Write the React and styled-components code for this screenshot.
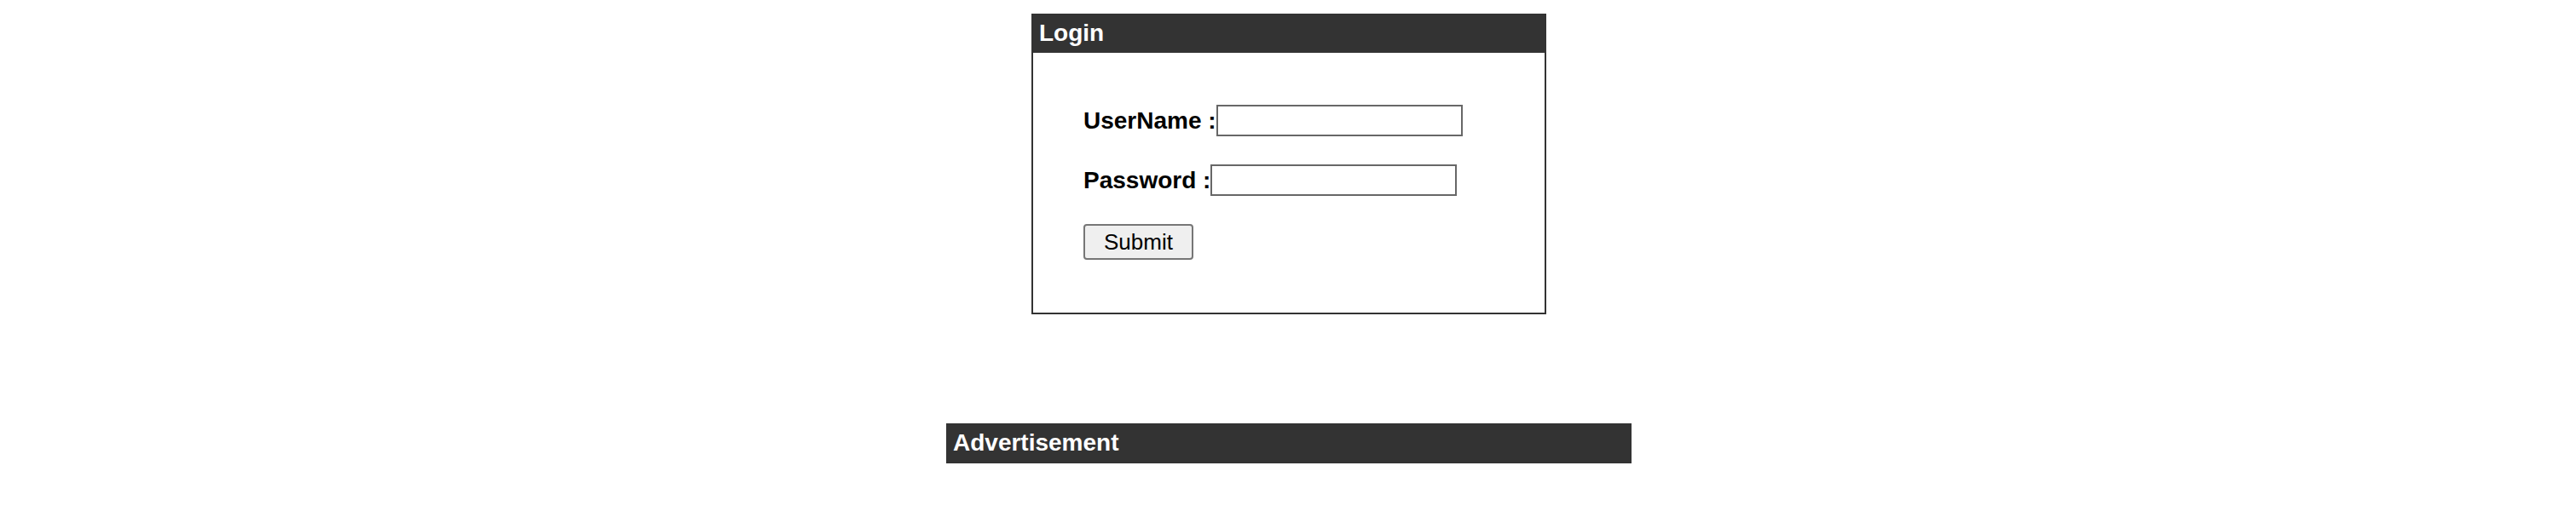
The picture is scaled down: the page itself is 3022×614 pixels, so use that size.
import React from "react";
import styled, { createGlobalStyle } from "styled-components";

const GlobalStyle = createGlobalStyle`
  body {
    margin: 0;
    background: #ffffff;
    font-family: "Liberation Sans", Arial, sans-serif;
    color: #000000;
  }
`;

const Page = styled.div`
  display: flex;
  flex-direction: column;
  align-items: center;
  padding: 16px 0 0 2px;
  gap: 128px;
`;

const Panel = styled.section`
  width: ${(p) => p.width}px;
  box-sizing: border-box;
  border: ${(p) => (p.bordered ? "2px solid #333333" : "none")};
`;

const PanelTitle = styled.h3`
  margin: 0;
  padding: ${(p) => (p.bordered ? "5px 7px 7px" : "7px 8px 8px")};
  background: #333333;
  color: #ffffff;
  font-size: 28px;
  line-height: 32px;
  font-weight: bold;
`;

const Form = styled.form`
  display: flex;
  flex-direction: column;
  align-items: flex-start;
  gap: 33px;
  padding: 61px 0 62px 59px;
`;

const Row = styled.div`
  display: flex;
  align-items: center;
`;

const Label = styled.label`
  font-size: 28px;
  font-weight: bold;
  line-height: 32px;
`;

const Input = styled.input`
  box-sizing: border-box;
  width: 289px;
  height: 37px;
  margin: 0;
  border: 2px solid #676767;
  background: #ffffff;
  font-family: "Liberation Sans", Arial, sans-serif;
  font-size: 20px;
  outline: none;
`;

const SubmitButton = styled.button`
  box-sizing: border-box;
  width: 129px;
  height: 42px;
  padding: 0;
  border: 2px solid #767676;
  border-radius: 4px;
  background: #efefef;
  color: #000000;
  font-family: "Liberation Sans", Arial, sans-serif;
  font-size: 26px;
`;

export default function App() {
  return (
    <>
      <GlobalStyle />
      <Page>
        <Panel width={604} bordered>
          <PanelTitle bordered>Login</PanelTitle>
          <Form onSubmit={(e) => e.preventDefault()}>
            <Row>
              <Label htmlFor="username">UserName :</Label>
              <Input id="username" type="text" />
            </Row>
            <Row>
              <Label htmlFor="password">Password :</Label>
              <Input id="password" type="password" />
            </Row>
            <SubmitButton type="submit">Submit</SubmitButton>
          </Form>
        </Panel>
        <Panel width={804}>
          <PanelTitle>Advertisement</PanelTitle>
        </Panel>
      </Page>
    </>
  );
}
